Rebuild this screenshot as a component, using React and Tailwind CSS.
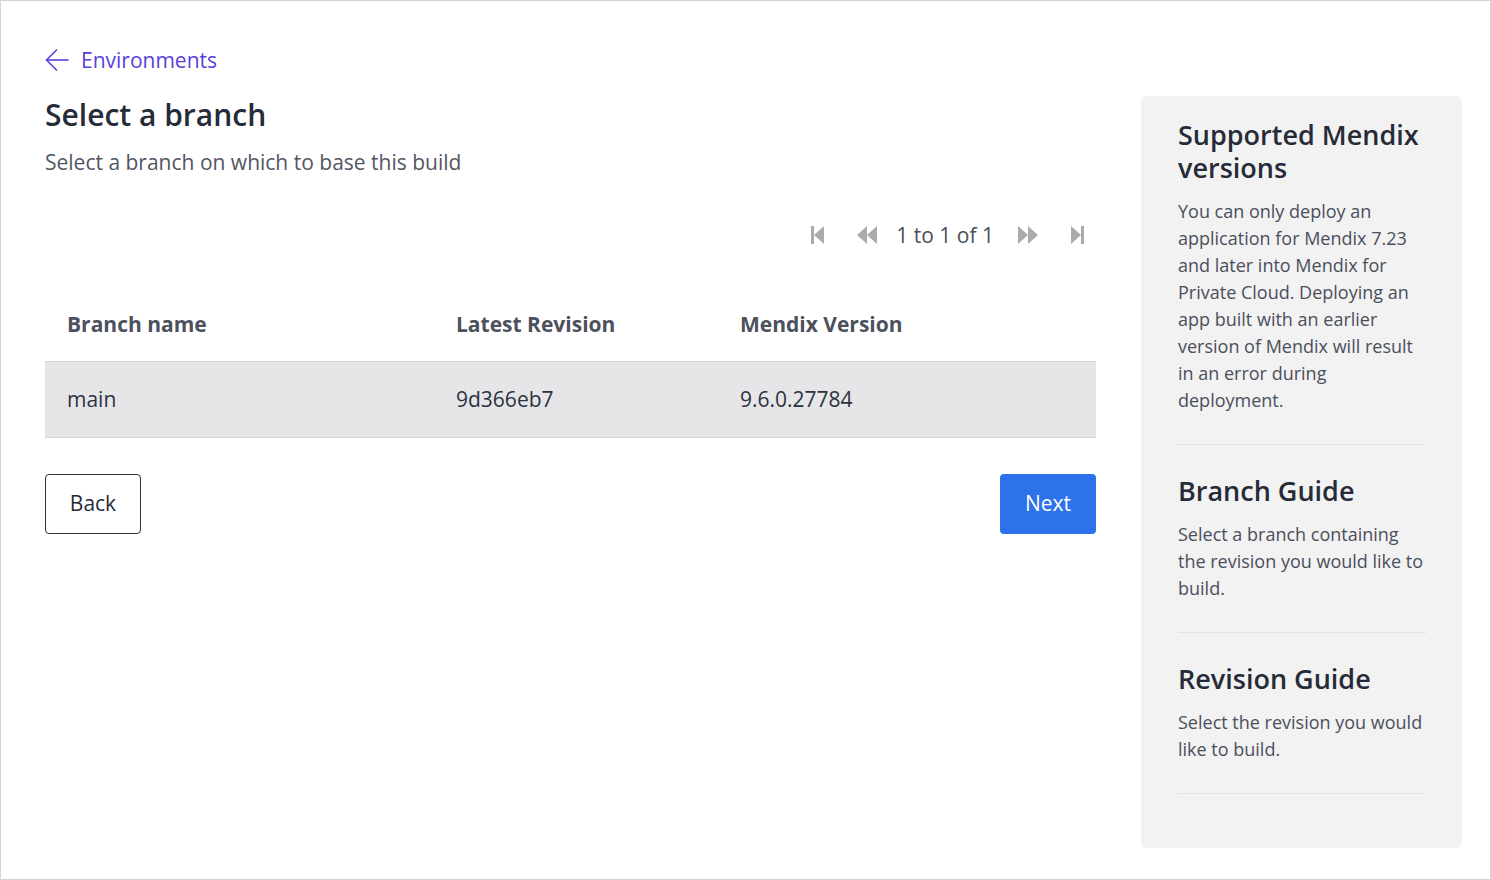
function BackArrow() {
  return (
    <svg width="24" height="24" viewBox="0 0 24 24" fill="none" stroke="currentColor" strokeWidth="1.6">
      <path d="M23.5 12H1.5" />
      <path d="M12 1.5L1.5 12L12 22.5" />
    </svg>
  );
}

function FirstIcon() {
  return (
    <svg width="14" height="20" viewBox="0 0 14 20">
      <rect x="1" y="1" width="3" height="18" fill="#ababab" />
      <polygon points="14,1 4,10 14,19" fill="#ababab" />
    </svg>
  );
}

function PrevIcon() {
  return (
    <svg width="21" height="20" viewBox="0 0 21 20">
      <polygon points="11,1 1,10 11,19" fill="#ababab" />
      <polygon points="21,1 11,10 21,19" fill="#ababab" />
    </svg>
  );
}

function NextIcon() {
  return (
    <svg width="21" height="20" viewBox="0 0 21 20">
      <polygon points="0,1 10,10 0,19" fill="#ababab" />
      <polygon points="10,1 20,10 10,19" fill="#ababab" />
    </svg>
  );
}

function LastIcon() {
  return (
    <svg width="14" height="20" viewBox="0 0 14 20">
      <polygon points="0,1 10,10 0,19" fill="#ababab" />
      <rect x="10" y="1" width="3" height="18" fill="#ababab" />
    </svg>
  );
}

function Guide({ title, children }) {
  return (
    <div className="border-b border-[#e2e2e2] pb-[30px]">
      <h3 className="text-[27px] font-semibold leading-[33px] text-[#262b38]">{title}</h3>
      <p className="mt-[14px] text-[18px] leading-[27px] text-[#4a4f5c]">{children}</p>
    </div>
  );
}

export default function App() {
  return (
    <div
      className="w-[1491px] h-[880px] border border-[#d4d4d4] bg-white flex pl-[44px] pr-[27px]"
      style={{ fontFamily: '"Open Sans", "Noto Sans", sans-serif' }}
    >
      <div className="w-[1051px] pt-[45px]">
        <a className="flex items-center gap-[12px] text-[21px] leading-[28px] text-[#5a3fd9]">
          <BackArrow />
          <span>Environments</span>
        </a>
        <h1 className="mt-[21px] text-[30px] font-semibold leading-[40px] text-[#262b38]">Select a branch</h1>
        <p className="mt-[13px] text-[21px] leading-[28px] text-[#515663]">
          Select a branch on which to base this build
        </p>

        <div className="mt-[45px] flex items-center justify-end pr-[11px] h-[28px]">
          <FirstIcon />
          <span className="ml-[32px]"><PrevIcon /></span>
          <span className="ml-[19px] text-[21px] leading-[28px] text-[#4a4f5c]">1 to 1 of 1</span>
          <span className="ml-[24px]"><NextIcon /></span>
          <span className="ml-[32px]"><LastIcon /></span>
        </div>

        <div className="mt-[40px]">
          <div className="flex items-center h-[72px] text-[21px] font-bold text-[#4c515c]">
            <div className="pl-[22px] w-[411px]">Branch name</div>
            <div className="w-[284px]">Latest Revision</div>
            <div>Mendix Version</div>
          </div>
          <div className="flex items-center h-[77px] bg-[#e6e6e8] border-t border-b border-[#d6d6d8] text-[21px] text-[#2d3240]">
            <div className="pl-[22px] w-[411px]">main</div>
            <div className="w-[284px]">9d366eb7</div>
            <div>9.6.0.27784</div>
          </div>
        </div>

        <div className="mt-[36px] flex justify-between">
          <button className="w-[96px] h-[60px] border border-[#30343f] rounded-[4px] text-[21px] text-[#262b38] bg-white">
            Back
          </button>
          <button className="w-[96px] h-[60px] rounded-[4px] text-[21px] text-white bg-[#2c72ea]">
            Next
          </button>
        </div>
      </div>

      <aside className="ml-[45px] mt-[95px] w-[321px] h-[752px] bg-[#f2f2f2] rounded-[6px] pl-[37px] pr-[36px] pt-[22px] flex flex-col gap-[29px]">
        <Guide title="Supported Mendix versions">
          You can only deploy an application for Mendix 7.23 and later into Mendix for Private Cloud.
          Deploying an app built with an earlier version of Mendix will result in an error during deployment.
        </Guide>
        <Guide title="Branch Guide">
          Select a branch containing the revision you would like to build.
        </Guide>
        <Guide title="Revision Guide">
          Select the revision you would like to build.
        </Guide>
      </aside>
    </div>
  );
}
